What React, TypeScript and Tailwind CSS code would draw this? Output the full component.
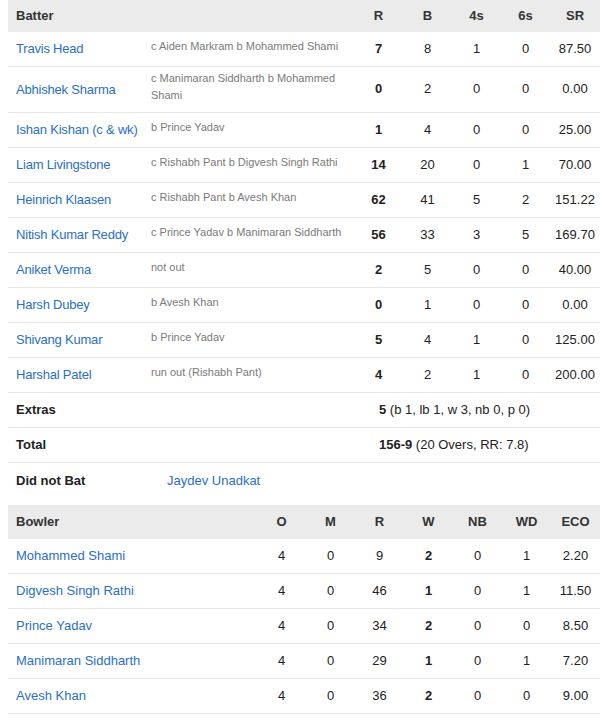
import React from "react";

const batters = [
  { name: "Travis Head", d: "c Aiden Markram b Mohammed Shami", r: 7, b: 8, f: 1, s: 0, sr: "87.50" },
  { name: "Abhishek Sharma", d: "c Manimaran Siddharth b Mohammed Shami", r: 0, b: 2, f: 0, s: 0, sr: "0.00" },
  { name: "Ishan Kishan (c & wk)", d: "b Prince Yadav", r: 1, b: 4, f: 0, s: 0, sr: "25.00" },
  { name: "Liam Livingstone", d: "c Rishabh Pant b Digvesh Singh Rathi", r: 14, b: 20, f: 0, s: 1, sr: "70.00" },
  { name: "Heinrich Klaasen", d: "c Rishabh Pant b Avesh Khan", r: 62, b: 41, f: 5, s: 2, sr: "151.22" },
  { name: "Nitish Kumar Reddy", d: "c Prince Yadav b Manimaran Siddharth", r: 56, b: 33, f: 3, s: 5, sr: "169.70" },
  { name: "Aniket Verma", d: "not out", r: 2, b: 5, f: 0, s: 0, sr: "40.00" },
  { name: "Harsh Dubey", d: "b Avesh Khan", r: 0, b: 1, f: 0, s: 0, sr: "0.00" },
  { name: "Shivang Kumar", d: "b Prince Yadav", r: 5, b: 4, f: 1, s: 0, sr: "125.00" },
  { name: "Harshal Patel", d: "run out (Rishabh Pant)", r: 4, b: 2, f: 1, s: 0, sr: "200.00" },
];

const bowlers = [
  { name: "Mohammed Shami", o: 4, m: 0, r: 9, w: 2, nb: 0, wd: 1, eco: "2.20" },
  { name: "Digvesh Singh Rathi", o: 4, m: 0, r: 46, w: 1, nb: 0, wd: 1, eco: "11.50" },
  { name: "Prince Yadav", o: 4, m: 0, r: 34, w: 2, nb: 0, wd: 0, eco: "8.50" },
  { name: "Manimaran Siddharth", o: 4, m: 0, r: 29, w: 1, nb: 0, wd: 1, eco: "7.20" },
  { name: "Avesh Khan", o: 4, m: 0, r: 36, w: 2, nb: 0, wd: 0, eco: "9.00" },
];

const batGrid = "grid grid-cols-[135px_211px_49px_49px_49px_49px_1fr] items-center";
const bowlGrid = "grid grid-cols-[249px_49px_49px_49px_49px_49px_49px_1fr] items-center";
const rowCls = "min-h-[35px] pt-[5px] pb-[6px] border-b border-[#e6e6e6]";

export default function App() {
  return (
    <div
      className="w-[600px] bg-white pl-2 text-[13px] text-[#222]"
      style={{ fontFamily: '"Liberation Sans", Arial, sans-serif' }}
    >
      {/* Batting header */}
      <div className={`${batGrid} h-[32px] bg-[#ebebeb] font-bold text-[#333]`}>
        <div className="pl-2">Batter</div>
        <div />
        <div className="text-center">R</div>
        <div className="text-center">B</div>
        <div className="text-center">4s</div>
        <div className="text-center">6s</div>
        <div className="text-center">SR</div>
      </div>
      {batters.map((b) => (
        <div key={b.name} className={`${batGrid} ${rowCls}`}>
          <div className="pl-2 whitespace-nowrap tracking-[-0.2px] text-[#2a6fc6] leading-[17px]">{b.name}</div>
          <div className="pl-2 pr-2 text-[11px] leading-[17px] text-[#7a7a7a] relative -top-[2px]">{b.d}</div>
          <div className="text-center font-bold">{b.r}</div>
          <div className="text-center">{b.b}</div>
          <div className="text-center">{b.f}</div>
          <div className="text-center">{b.s}</div>
          <div className="text-center">{b.sr}</div>
        </div>
      ))}
      <div className={`flex items-center ${rowCls}`}>
        <div className="w-[135px] pl-2 font-bold">Extras</div>
        <div className="w-[211px]" />
        <div className="pl-[25px]">
          <span className="font-bold">5</span> (b 1, lb 1, w 3, nb 0, p 0)
        </div>
      </div>
      <div className={`flex items-center ${rowCls}`}>
        <div className="w-[135px] pl-2 font-bold">Total</div>
        <div className="w-[211px]" />
        <div className="pl-[25px]">
          <span className="font-bold">156-9</span> (20 Overs, RR: 7.8)
        </div>
      </div>
      <div className="flex items-center min-h-[35px] py-[5px]">
        <div className="w-[151px] pl-2 font-bold">Did not Bat</div>
        <div className="pl-[8px] text-[#2a6fc6]">Jaydev Unadkat</div>
      </div>

      {/* Bowling */}
      <div className={`${bowlGrid} mt-[7px] h-[34px] bg-[#ebebeb] font-bold text-[#333]`}>
        <div className="pl-2">Bowler</div>
        <div className="text-center">O</div>
        <div className="text-center">M</div>
        <div className="text-center">R</div>
        <div className="text-center">W</div>
        <div className="text-center">NB</div>
        <div className="text-center">WD</div>
        <div className="text-center">ECO</div>
      </div>
      {bowlers.map((b) => (
        <div key={b.name} className={`${bowlGrid} ${rowCls}`}>
          <div className="pl-2 text-[#2a6fc6] leading-[17px]">{b.name}</div>
          <div className="text-center">{b.o}</div>
          <div className="text-center">{b.m}</div>
          <div className="text-center">{b.r}</div>
          <div className="text-center font-bold">{b.w}</div>
          <div className="text-center">{b.nb}</div>
          <div className="text-center">{b.wd}</div>
          <div className="text-center">{b.eco}</div>
        </div>
      ))}
    </div>
  );
}
